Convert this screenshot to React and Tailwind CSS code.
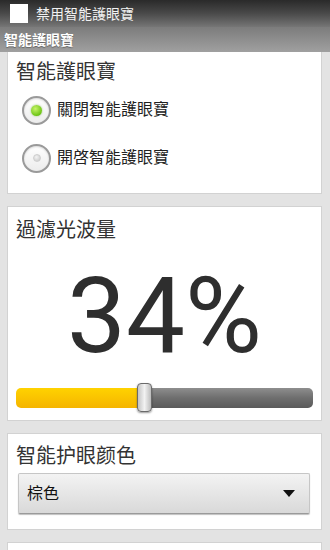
import { useState } from 'react';

const cjk = { fontFamily: '"Roboto", "Noto Sans CJK TC", sans-serif' };

function Radio({ checked, label, onClick }) {
  return (
    <div className="flex items-center h-[48px] cursor-pointer" onClick={onClick}>
      <div className="ml-[6px] w-[29px] h-[29px] rounded-full border-[2px] border-[#9a9a9a] bg-gradient-to-b from-[#ffffff] to-[#ececec] flex items-center justify-center shadow-[inset_0_1px_2px_rgba(0,0,0,0.15)]">
        {checked ? (
          <div className="w-[11px] h-[11px] rounded-full bg-[radial-gradient(circle_at_40%_35%,#c8f56a,#6cc414_70%,#4f9a0a)] shadow-[0_0_2px_rgba(80,160,0,0.6)]" />
        ) : (
          <div className="w-[8px] h-[8px] rounded-full bg-[radial-gradient(circle_at_40%_35%,#f4f4f4,#c4c4c4)] border border-[#cfcfcf]" />
        )}
      </div>
      <span className="ml-[6px] text-[16px] leading-[20px] text-[#222]">{label}</span>
    </div>
  );
}

export default function App() {
  const [mode, setMode] = useState('off');

  return (
    <div className="w-[330px] h-[550px] overflow-hidden bg-[#e3e3e3]" style={cjk}>
      {/* Title bar */}
      <div className="h-[27px] flex items-center bg-gradient-to-b from-[#2a2a2a] via-[#4a4a4a] to-[#767676]">
        <div className="ml-[10px] w-[18px] h-[19px] bg-white" />
        <span className="ml-[8px] text-[14px] leading-[18px] text-[#f2f2f2]">禁用智能護眼寶</span>
      </div>

      {/* Section header */}
      <div className="h-[25px] flex items-center bg-gradient-to-b from-[#7c7c7c] to-[#a0a0a0]">
        <span className="ml-[4px] text-[14px] leading-[18px] font-bold text-white [text-shadow:0_1px_1px_rgba(0,0,0,0.35)]">智能護眼寶</span>
      </div>

      <div className="pl-[7px] pr-[8px] flex flex-col gap-[12px]">
        {/* Card 1 */}
        <div className="bg-white border-x border-b border-[#d2d2d2] h-[142px] pt-[8px] pl-[8px]">
          <div className="text-[20px] leading-[24px] text-[#333]">智能護眼寶</div>
          <div className="mt-[2px]">
            <Radio checked={mode === 'off'} label="關閉智能護眼寶" onClick={() => setMode('off')} />
            <Radio checked={mode === 'on'} label="開啓智能護眼寶" onClick={() => setMode('on')} />
          </div>
        </div>

        {/* Card 2 */}
        <div className="bg-white border border-[#d2d2d2] h-[215px] pt-[11px]">
          <div className="pl-[8px] text-[20px] leading-[24px] text-[#333]">過濾光波量</div>
          <div className="mt-[20px] h-[110px] text-center text-[105px] leading-[110px] text-[#2e2e2e] font-normal" style={{ fontFamily: 'Roboto, "Liberation Sans", sans-serif' }}>
            34%
          </div>
          <div className="relative mt-[11px] mx-[8px] h-[29px] flex items-center">
            <div className="flex w-full h-[20px] rounded-[5px] overflow-hidden">
              <div className="w-[124px] bg-gradient-to-b from-[#ffd200] to-[#f5b400]" />
              <div className="flex-1 bg-gradient-to-b from-[#8e8e8e] via-[#6e6e6e] to-[#5a5a5a]" />
            </div>
            <div className="absolute left-[121px] top-0 w-[15px] h-[29px] rounded-[4px] border border-[#6a6a6a] bg-gradient-to-r from-[#c4c4c4] via-[#f2f2f2] to-[#bcbcbc] shadow-[0_1px_2px_rgba(0,0,0,0.4)]" />
          </div>
        </div>

        {/* Card 3 */}
        <div className="bg-white border border-[#d2d2d2] h-[97px] pt-[10px]">
          <div className="pl-[8px] text-[20px] leading-[24px] text-[#333]">智能护眼颜色</div>
          <div className="mt-[5px] ml-[10px] mr-[11px] h-[41px] rounded-[2px] border border-[#c6c6c6] border-b-[#9a9a9a] bg-gradient-to-b from-[#f3f3f3] to-[#d9d9d9] shadow-[0_1px_1px_rgba(0,0,0,0.25)] flex items-center justify-between">
            <span className="ml-[8px] text-[16px] leading-[20px] text-[#111]">棕色</span>
            <svg width="12" height="7" viewBox="0 0 12 7" className="mr-[14px]">
              <path d="M0 0 L12 0 L6 7 Z" fill="#111" />
            </svg>
          </div>
        </div>

        {/* Card 4 (cut off) */}
        <div className="bg-white border border-[#d2d2d2] h-[80px]" />
      </div>
    </div>
  );
}
